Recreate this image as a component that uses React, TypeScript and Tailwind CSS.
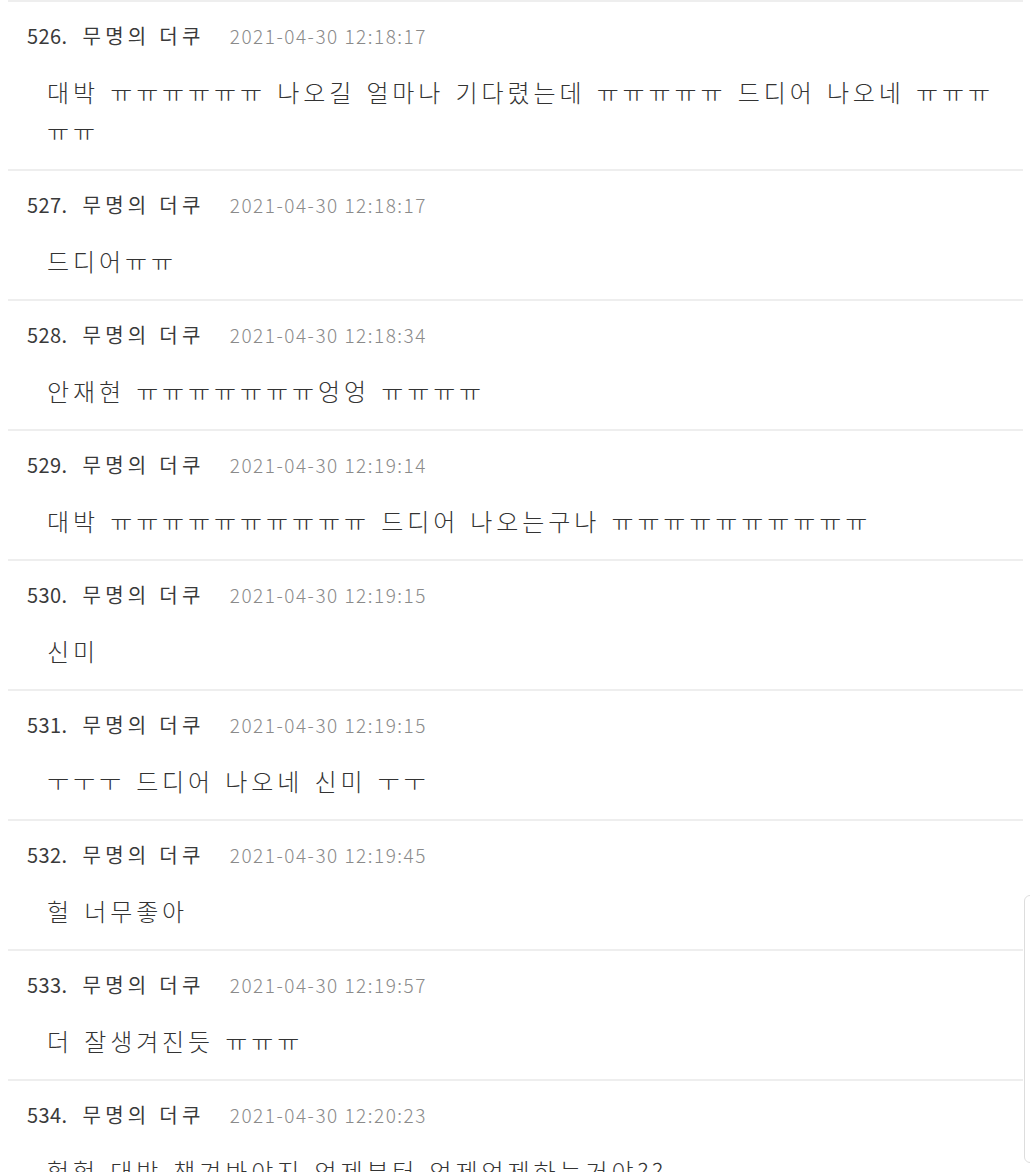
import React from 'react';

type Comment = { no: number; time: string; text: string };

const comments: Comment[] = [
  { no: 526, time: '2021-04-30 12:18:17', text: '대박 ㅠㅠㅠㅠㅠㅠ 나오길 얼마나 기다렸는데 ㅠㅠㅠㅠㅠ 드디어 나오네 ㅠㅠㅠㅠㅠ' },
  { no: 527, time: '2021-04-30 12:18:17', text: '드디어ㅠㅠ' },
  { no: 528, time: '2021-04-30 12:18:34', text: '안재현 ㅠㅠㅠㅠㅠㅠㅠ엉엉 ㅠㅠㅠㅠ' },
  { no: 529, time: '2021-04-30 12:19:14', text: '대박 ㅠㅠㅠㅠㅠㅠㅠㅠㅠㅠ 드디어 나오는구나 ㅠㅠㅠㅠㅠㅠㅠㅠㅠㅠ' },
  { no: 530, time: '2021-04-30 12:19:15', text: '신미' },
  { no: 531, time: '2021-04-30 12:19:15', text: 'ㅜㅜㅜ 드디어 나오네 신미 ㅜㅜ' },
  { no: 532, time: '2021-04-30 12:19:45', text: '헐 너무좋아' },
  { no: 533, time: '2021-04-30 12:19:57', text: '더 잘생겨진듯 ㅠㅠㅠ' },
  { no: 534, time: '2021-04-30 12:20:23', text: '헐헐 대박 챙겨봐야지 언제부터 언제언제하는거야??' },
];

const font = "font-['Noto_Sans_CJK_KR','Noto_Sans',sans-serif]";

const CommentRow = ({ c }: { c: Comment }) => (
  <li className="border-t-2 border-[#eeeeee] pt-[20px] pb-[19px] pl-[19px] pr-[14px]">
    <div className="flex items-center h-[28px] leading-[28px] text-[#3a3a3a]">
      <span className="text-[20px] tracking-[0.4px]">{c.no}.</span>
      <span className="ml-[15px] text-[20px] tracking-[4.3px]">무명의 더쿠</span>
      <span className="ml-[25px] text-[19px] tracking-[1.5px] text-[#8a8a8a] font-light">
        {c.time}
      </span>
    </div>
    <p className="mt-[22px] pl-[20px] text-[24px] leading-[39px] tracking-[3.9px] [word-spacing:2px] text-[#333333] font-light">
      {c.text}
    </p>
  </li>
);

export default function App() {
  return (
    <div className={`relative min-h-screen bg-white ${font}`}>
      <ul className="ml-[8px] w-[1015px]">
        {comments.map((c) => (
          <CommentRow key={c.no} c={c} />
        ))}
      </ul>
      <div className="fixed left-[1024px] top-[895px] h-[268px] w-[20px] rounded-l-[6px] border border-[#dddddd] bg-white" />
    </div>
  );
}
